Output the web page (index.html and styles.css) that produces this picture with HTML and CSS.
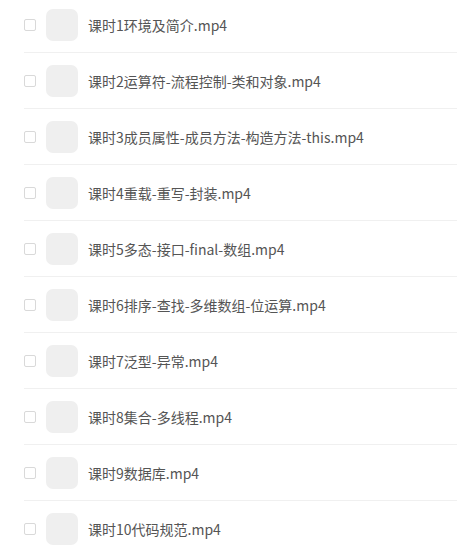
FILE: index.html
```html
<!DOCTYPE html>
<html lang="zh-CN">
<head>
<meta charset="utf-8">
<title>课时列表</title>
<link rel="stylesheet" href="styles.css">
</head>
<body>
<ul class="list">
  <li class="row"><span class="check"></span><span class="thumb"></span><span class="name">课时1环境及简介.mp4</span></li>
  <li class="row"><span class="check"></span><span class="thumb"></span><span class="name">课时2运算符-流程控制-类和对象.mp4</span></li>
  <li class="row"><span class="check"></span><span class="thumb"></span><span class="name">课时3成员属性-成员方法-构造方法-this.mp4</span></li>
  <li class="row"><span class="check"></span><span class="thumb"></span><span class="name">课时4重载-重写-封装.mp4</span></li>
  <li class="row"><span class="check"></span><span class="thumb"></span><span class="name">课时5多态-接口-final-数组.mp4</span></li>
  <li class="row"><span class="check"></span><span class="thumb"></span><span class="name">课时6排序-查找-多维数组-位运算.mp4</span></li>
  <li class="row"><span class="check"></span><span class="thumb"></span><span class="name">课时7泛型-异常.mp4</span></li>
  <li class="row"><span class="check"></span><span class="thumb"></span><span class="name">课时8集合-多线程.mp4</span></li>
  <li class="row"><span class="check"></span><span class="thumb"></span><span class="name">课时9数据库.mp4</span></li>
  <li class="row"><span class="check"></span><span class="thumb"></span><span class="name">课时10代码规范.mp4</span></li>
</ul>
</body>
</html>
```
FILE: styles.css
```css
html, body {
  margin: 0;
  padding: 0;
  background: #fff;
}
body {
  font-family: "Noto Sans CJK SC", "Noto Sans", sans-serif;
  color: #555;
  overflow: hidden;
}
.list {
  list-style: none;
  margin: -3px 0 0 24px;
  padding: 0;
}
.row {
  display: flex;
  align-items: center;
  height: 32px;
  padding: 12px 0 11px;
  border-bottom: 1px solid #f0f0f0;
}
.check {
  flex: none;
  width: 10px;
  height: 10px;
  border: 1px solid #d9d9d9;
  border-radius: 2px;
  background: #fff;
}
.thumb {
  flex: none;
  width: 32px;
  height: 32px;
  margin-left: 10px;
  border-radius: 7px;
  background: #efefef;
}
.name {
  margin-left: 10px;
  font-size: 14px;
  line-height: 20px;
  white-space: nowrap;
}
```
